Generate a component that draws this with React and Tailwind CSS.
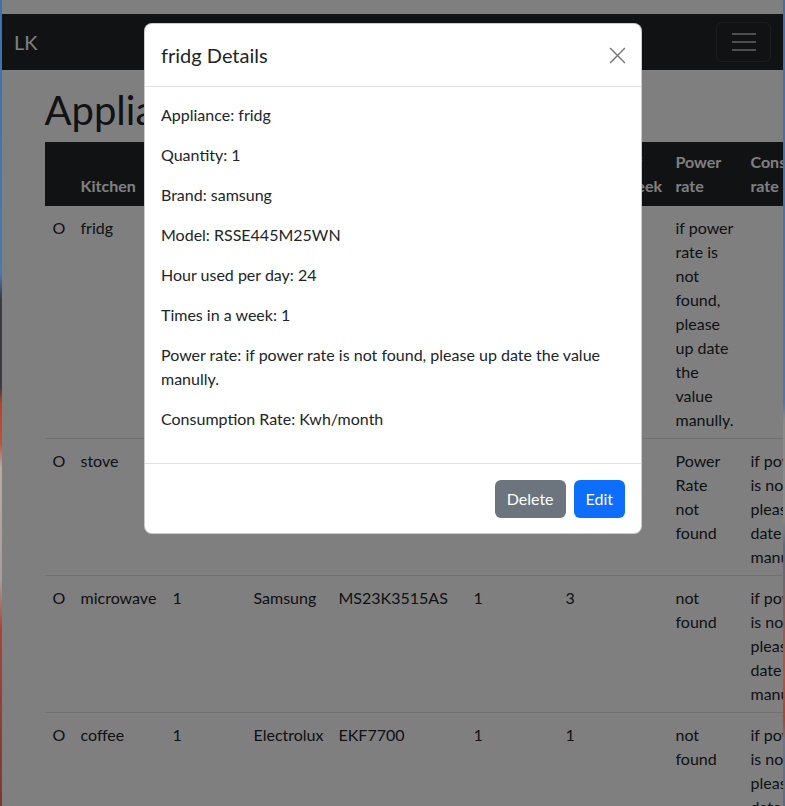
import React from 'react';

const consumo = ['if power rate', 'is not found,', 'please up', 'date the value', 'manully.'];

const filas = [
  { n: 'O', nombre: 'fridg', qty: '1', marca: 'samsung', modelo: 'RSSE445M25WN', horas: '24', veces: '1', power: ['if power', 'rate is', 'not', 'found,', 'please', 'up date', 'the', 'value', 'manully.'], cons: [] },
  { n: 'O', nombre: 'stove', qty: '1', marca: 'LG', modelo: 'LRE3193ST', horas: '2', veces: '7', power: ['Power', 'Rate', 'not', 'found'], cons: consumo },
  { n: 'O', nombre: 'microwave', qty: '1', marca: 'Samsung', modelo: 'MS23K3515AS', horas: '1', veces: '3', power: ['not', 'found'], cons: consumo },
  { n: 'O', nombre: 'coffee', qty: '1', marca: 'Electrolux', modelo: 'EKF7700', horas: '1', veces: '1', power: ['not', 'found'], cons: consumo },
];

const Lineas = ({ items }) => (
  <>
    {items.map((l, i) => (
      <span key={i} className="block whitespace-nowrap">{l}</span>
    ))}
  </>
);

const detalles = [
  'Appliance: fridg',
  'Quantity: 1',
  'Brand: samsung',
  'Model: RSSE445M25WN',
  'Hour used per day: 24',
  'Times in a week: 1',
  'Power rate: if power rate is not found, please up date the value manully.',
  'Consumption Rate: Kwh/month',
];

const App = () => {
  const th = 'p-2 text-left align-bottom font-bold';
  const td = 'pt-[10px] pb-[6px] px-2 align-top border-b border-[#dee2e6]';

  return (
    <div className="flex h-[806px] w-[785px] overflow-hidden font-['Lato',sans-serif] text-base leading-6 text-[#212529]">
      <div className="w-[2px] shrink-0 bg-[linear-gradient(to_bottom,#3f6fae_0%,#4a78b0_34%,#3a3a44_37%,#3a3a44_48%,#b4442f_50%,#c0503c_55%,#b9aaa8_58%,#a89c9c_72%,#a8443a_78%,#7a3a34_100%)]"></div>

      <div className="relative w-[781px] shrink-0 overflow-hidden bg-white">
        <div className="h-[14px]"></div>

        <nav className="h-14 bg-[#212529] px-3 flex items-center justify-between">
          <span className="text-xl text-white">LK</span>
          <button className="w-[55px] h-10 rounded-md border border-white/10 flex items-center justify-center">
            <span className="flex flex-col gap-[6px]">
              <span className="block w-6 h-[2px] bg-white/55"></span>
              <span className="block w-6 h-[2px] bg-white/55"></span>
              <span className="block w-6 h-[2px] bg-white/55"></span>
            </span>
          </button>
        </nav>

        <div className="w-[720px] mx-auto px-3">
          <h1 className="mt-4 mb-2 text-[40px] leading-[48px] font-normal">Appliances</h1>
          <table className="table-fixed border-collapse w-[830px]">
            <thead className="bg-[#212529] text-white">
              <tr>
                <th className={`${th} w-[28px]`}></th>
                <th className={`${th} w-[92px]`}>Kitchen</th>
                <th className={`${th} w-[81px]`}>Quantity</th>
                <th className={`${th} w-[85px]`}>Brand</th>
                <th className={`${th} w-[135px]`}>Model</th>
                <th className={`${th} w-[92px]`}><Lineas items={['Hours', 'per day']} /></th>
                <th className={`${th} w-[110px]`}><Lineas items={['Number of', 'Times a week']} /></th>
                <th className={`${th} w-[75px]`}><Lineas items={['Power', 'rate']} /></th>
                <th className={`${th} w-[132px]`}><Lineas items={['Consumption', 'rate']} /></th>
              </tr>
            </thead>
            <tbody>
              {filas.map((f) => (
                <tr key={f.nombre}>
                  <td className={td}>{f.n}</td>
                  <td className={td}>{f.nombre}</td>
                  <td className={td}>{f.qty}</td>
                  <td className={td}>{f.marca}</td>
                  <td className={td}>{f.modelo}</td>
                  <td className={td}>{f.horas}</td>
                  <td className={td}>{f.veces}</td>
                  <td className={td}><Lineas items={f.power} /></td>
                  <td className={td}><Lineas items={f.cons} /></td>
                </tr>
              ))}
            </tbody>
          </table>
        </div>

        {/* backdrop */}
        <div className="absolute inset-0 bg-black/50"></div>

        {/* modal */}
        <div className="absolute left-[142px] top-[23px] w-[498px] bg-white rounded-lg border border-black/20 overflow-hidden">
          <div className="flex items-center justify-between p-4 border-b border-[#dee2e6]">
            <h5 className="text-xl leading-[30px] font-normal">fridg Details</h5>
            <button className="w-6 h-6 flex items-center justify-center -mr-1 text-[#7a7a7a]">
              <svg width="17" height="17" viewBox="0 0 16 16" fill="none" stroke="currentColor" strokeWidth="1.4">
                <path d="M1 1L15 15M15 1L1 15" />
              </svg>
            </button>
          </div>
          <div className="p-4">
            {detalles.map((d) => (
              <p key={d} className="mb-4">{d}</p>
            ))}
          </div>
          <div className="flex justify-end items-center gap-2 px-4 pt-4 pb-[15px] border-t border-[#dee2e6]">
            <button className="h-[38px] px-3 rounded-md bg-[#6c757d] text-white">Delete</button>
            <button className="h-[38px] px-3 rounded-md bg-[#0d6efd] text-white">Edit</button>
          </div>
        </div>
      </div>

      <div className="w-[2px] shrink-0 bg-[linear-gradient(to_bottom,#3f6fae_0%,#4a78b0_50%,#8a8a8a_52%,#8a8a8a_64%,#5a6a80_68%,#c0503c_84%,#b04030_89%,#6a7590_92%,#5a6a85_100%)]"></div>
    </div>
  );
};

export default App;
